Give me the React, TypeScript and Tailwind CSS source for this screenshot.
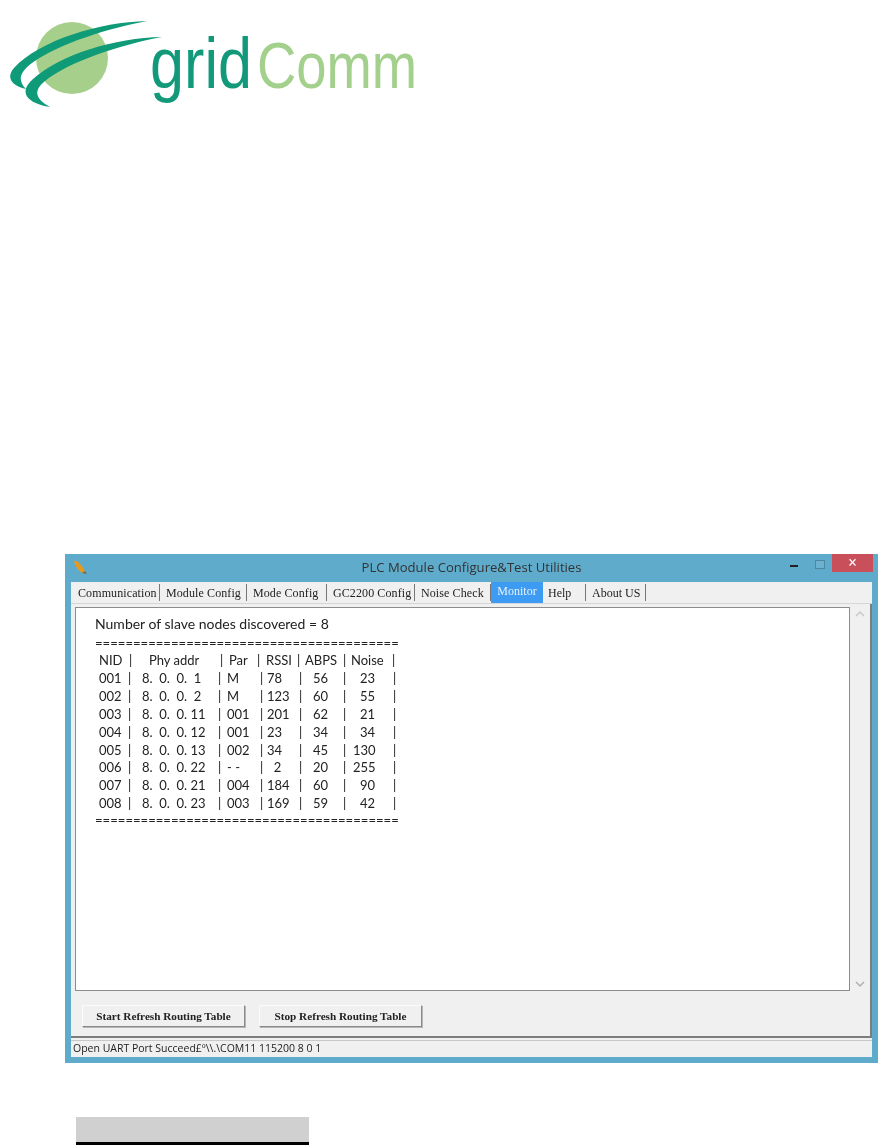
const tabs = [
  { label: "Communication", width: "w-[82px]" },
  { label: "Module Config", width: "w-[81px]" },
  { label: "Mode Config", width: "w-[74px]" },
  { label: "GC2200 Config", width: "w-[82px]" },
  { label: "Noise Check", width: "w-[70px]" },
];

const rows = [
  ["001", "8.  0.  0.  1", "M", "78", "56", "23"],
  ["002", "8.  0.  0.  2", "M", "123", "60", "55"],
  ["003", "8.  0.  0. 11", "001", "201", "62", "21"],
  ["004", "8.  0.  0. 12", "001", "23", "34", "34"],
  ["005", "8.  0.  0. 13", "002", "34", "45", "130"],
  ["006", "8.  0.  0. 22", "- -", "  2", "20", "255"],
  ["007", "8.  0.  0. 21", "004", "184", "60", "90"],
  ["008", "8.  0.  0. 23", "003", "169", "59", "42"],
];

const SEP = "========================================";

const Logo = () => (
  <div className="flex h-[110px] items-start pl-[8px] pt-[18px] blur-[0.4px]">
    <svg width="142" height="92" viewBox="8 18 142 92" className="shrink-0 overflow-visible">
      <circle cx="72" cy="58" r="36" fill="#a6cf8b" />
      <path d="M147 21C100 22 40 40 14 68C7 76 9 85 26 89C17 80 20 72 32 63C60 43 110 28 147 21Z" fill="#0f9a78" />
      <path d="M162 37C115 38 60 54 32 80C19 92 26 103 50 107C34 98 34 90 45 81C70 61 120 45 162 37Z" fill="#0f9a78" />
    </svg>
    <div className="mt-[2px] flex items-baseline font-['Liberation_Sans',sans-serif] leading-[86px]">
      <span className="w-[107px] origin-left scale-x-[0.85] text-[72px] text-[#12997a]">grid</span>
      <span className="w-[158px] origin-left scale-x-[0.85] text-[64px] text-[#a3d08c]">Comm</span>
    </div>
  </div>
);

const Pipe = () => <span>|</span>;

const TableRow = ({ cells }: { cells: string[] }) => (
  <div className="grid h-[17.9px] grid-cols-[29px_14px_76px_9px_33px_7px_32px_14px_30px_10px_40px_5px] items-center whitespace-pre">
    <span>{cells[0]}</span>
    <Pipe />
    <span>{cells[1]}</span>
    <Pipe />
    <span>{cells[2]}</span>
    <Pipe />
    <span>{cells[3]}</span>
    <Pipe />
    <span>{cells[4]}</span>
    <Pipe />
    <span className="pr-[18px] text-right">{cells[5]}</span>
    <Pipe />
  </div>
);

const Btn = ({ label }: { label: string }) => (
  <button className="h-[22px] w-[163px] border border-t-[#fbfbfb] border-l-[#fbfbfb] border-r-[#8a8a8a] border-b-[#8a8a8a] bg-[#f0f0f0] text-[11.2px] font-bold text-[#222] shadow-[1px_1px_0_#b5b5b5]">
    {label}
  </button>
);

export default function App() {
  return (
    <div className="flex h-[1146px] w-[878px] flex-col overflow-hidden bg-white font-['Liberation_Serif',serif]">
      <Logo />

      <div className="ml-[65px] mt-[444px] flex h-[509px] flex-col bg-[#5fabcb] pb-[6px] pl-[6px] pr-[6px] blur-[0.4px]">
        {/* title bar */}
        <div className="relative flex h-[28px] shrink-0 items-center justify-center">
          <svg width="16" height="16" viewBox="0 0 16 16" className="absolute left-[1px] top-[5px]">
            <path d="M2 2C5 1 9 5 13 12L10 14C6 11 3 7 2 2Z" fill="#e59a1e" />
            <path d="M10 14L13 12L15 15Z" fill="#7a6a4a" />
          </svg>
          <span className="font-['Open_Sans',sans-serif] text-[13.1px] text-[#333]">
            PLC Module Configure&amp;Test Utilities
          </span>
          <div className="absolute right-[-1px] top-0 flex items-start">
            <div className="mr-[17px] mt-[11px] h-[2px] w-[8px] bg-[#222]" />
            <div className="mr-[7px] mt-[6px] h-[9px] w-[10px] border border-[#4f86a0] bg-[#6cb2d0]" />
            <div className="flex h-[18px] w-[41px] items-center justify-center bg-[#c9505a] text-[16px] font-bold leading-none text-white">
              ×
            </div>
          </div>
        </div>

        {/* tabs + panel */}
        <div className="flex min-h-0 flex-1 flex-col bg-[#f0f0f0]">
          <div className="flex h-[22px] shrink-0 items-center border-b border-[#d6d6d6] text-[12px] text-[#222]">
            <div className="flex h-full items-center pl-[7px]">
              {tabs.map((t) => (
                <span key={t.label} className={`${t.width} mr-[6px] flex h-[17px] items-center whitespace-nowrap border-r border-[#777] leading-none tracking-[0.1px]`}>
                  {t.label}
                </span>
              ))}
            </div>
            <span className="ml-[-6px] flex h-[21px] w-[52px] items-center justify-center bg-[#3d9bf3] pb-[3px] text-[#e6f1fb]">
              Monitor
            </span>
            <span className="ml-[5px] w-[37px]">Help</span>
            <span className="flex h-[17px] w-[61px] items-center border-x border-[#777] pl-[6px]">About US</span>
          </div>

          <div className="flex min-h-0 flex-1 flex-col border-r-2 border-b-2 border-[#7d7d7d] pl-[4px] pt-[3px]">
            <div className="flex h-[384px] shrink-0">
              <div className="h-full w-[775px] border border-[#8c8c8c] bg-white pl-[19px] pt-[7px] font-['Lato',sans-serif] text-[13px] leading-[18px] text-[#222]">
                <div className="text-[14px]">Number of slave nodes discovered = 8</div>
                <div className="mt-[3px] h-[14px] text-[13.1px] leading-[14px]">{SEP}</div>
                <div className="ml-[4px] mt-[1px]">
                  <div className="grid h-[18px] grid-cols-[30px_20px_71px_9px_28px_9px_31px_8px_38px_8px_41px_5px] items-center whitespace-pre">
                    <span>NID</span>
                    <Pipe />
                    <span>Phy addr</span>
                    <Pipe />
                    <span>Par</span>
                    <Pipe />
                    <span>RSSI</span>
                    <Pipe />
                    <span>ABPS</span>
                    <Pipe />
                    <span>Noise</span>
                    <Pipe />
                  </div>
                  {rows.map((r) => (
                    <TableRow key={r[0]} cells={r} />
                  ))}
                </div>
                <div className="mt-[1px] h-[14px] text-[13.1px] leading-[14px]">{SEP}</div>
              </div>
              <div className="flex flex-1 flex-col items-center justify-between pb-[3px] pt-[3px]">
                <svg width="10" height="8" viewBox="0 0 10 8"><path d="M1 6L5 2L9 6" fill="none" stroke="#c8c8c8" strokeWidth="1.5" /></svg>
                <svg width="10" height="8" viewBox="0 0 10 8"><path d="M1 2L5 6L9 2" fill="none" stroke="#b0b0b0" strokeWidth="1.5" /></svg>
              </div>
            </div>
            <div className="flex gap-[14px] pl-[7px] pt-[14px]">
              <Btn label="Start Refresh Routing Table" />
              <Btn label="Stop Refresh Routing Table" />
            </div>
          </div>

          <div className="mt-[2px] flex h-[17px] shrink-0 items-center border-t border-[#c8c8c8] pl-[2px] font-['Open_Sans',sans-serif] text-[10.5px] text-[#222]">
            Open UART Port Succeed£º\\.\COM11 115200 8 0 1
          </div>
        </div>
      </div>

      <div className="ml-[76px] mt-[54px] h-[28px] w-[233px] border-b-[3px] border-black bg-[#d0d0d0]" />
    </div>
  );
}
